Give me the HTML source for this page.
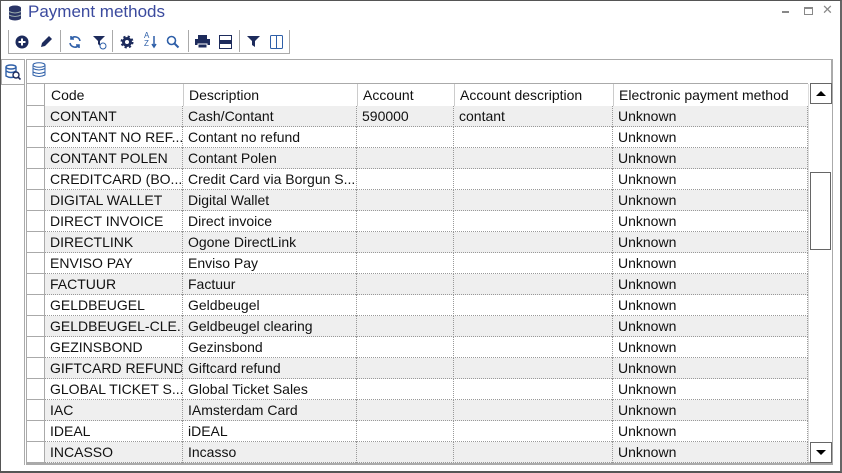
<!DOCTYPE html>
<html><head><style>
*{margin:0;padding:0;box-sizing:border-box}
body{width:842px;height:473px;background:#fff;font-family:"Liberation Sans",sans-serif;position:relative;overflow:hidden}
.win{position:absolute;left:0;top:0;width:842px;height:473px;border:1px solid #555;border-bottom:2px solid #555;border-right:2px solid #666}
.title{position:absolute;left:28px;top:2px;font-size:17px;color:#3b4a9e}
.tb{position:absolute;top:30px;height:24px;left:8px;width:282px;border-right:1px solid #aaa;border-left:1px solid #aaa;border-bottom:1px solid #aaa}
.sep{position:absolute;top:30px;width:1px;height:22px;background:#aaa}
.ic{position:absolute;top:35px}
.grid{position:absolute;left:26px;top:59px;width:807px;height:406px;border:1px solid #aaa;border-right:2px solid #aaa;border-bottom:3px solid #aaa}
.hdr{position:absolute;top:84px;height:22px;font-size:14px;color:#111;line-height:22px}
.row{position:absolute;left:45px;width:763px;height:21px;border-bottom:1px dotted #999}
.row div{position:absolute;top:0;height:21px;line-height:20px;font-size:14px;color:#111;padding-left:5px;border-right:1px dotted #999;white-space:nowrap;overflow:hidden}
.g{background:#efefef}
.ind{position:absolute;left:27px;width:18px;height:21px;border-bottom:1px solid #aaa;border-right:1px solid #aaa}
</style></head><body>
<div class="win"></div>
<svg style="position:absolute;left:8px;top:5px" width="14" height="16"><ellipse cx="7" cy="3" rx="6" ry="2.5" fill="#2a3566"/><rect x="1" y="3" width="12" height="10" fill="#2a3566"/><ellipse cx="7" cy="13" rx="6" ry="2.5" fill="#2a3566"/><path d="M1 6.5q6 3 12 0M1 10q6 3 12 0" stroke="#9aa" fill="none"/></svg>
<div class="title">Payment methods</div>
<div style="position:absolute;left:782px;top:11px;width:7px;height:2px;background:#888"></div>
<div style="position:absolute;left:804px;top:7px;width:9px;height:8px;border:1px solid #888;border-top-width:2px"></div>
<div style="position:absolute;left:822px;top:2px;font-size:13px;color:#888">✕</div>
<div class="tb"></div>
<div class="sep" style="left:60px"></div><div class="sep" style="left:112px"></div><div class="sep" style="left:188px"></div><div class="sep" style="left:239px"></div>
<svg class="ic" style="left:15px" width="14" height="14"><circle cx="7" cy="7" r="6.5" fill="#1d2b5c"/><path d="M7 3.5v7M3.5 7h7" stroke="#fff" stroke-width="2"/></svg>
<svg class="ic" style="left:39px" width="14" height="14"><path d="M2 12l1-4 7-7 3 3-7 7z" fill="#1d2b5c"/></svg>
<svg class="ic" style="left:68px" width="14" height="14"><path d="M12 6a5 5 0 0 0-9-2M2 8a5 5 0 0 0 9 2" stroke="#2e5fa8" stroke-width="1.6" fill="none"/><path d="M3 1v3h3M11 13v-3H8" stroke="#2e5fa8" stroke-width="1.6" fill="none"/></svg>
<svg class="ic" style="left:92px" width="15" height="15"><path d="M1 1h12l-5 5v5l-2-2V6z" fill="#1d2b5c"/><circle cx="11" cy="11" r="3" stroke="#2e5fa8" fill="none"/></svg>
<svg class="ic" style="left:120px" width="14" height="14"><circle cx="7" cy="7" r="5" fill="#1d2b5c" stroke="#1d2b5c" stroke-width="3" stroke-dasharray="2 2"/><circle cx="7" cy="7" r="2" fill="#fff"/></svg>
<div class="ic" style="left:144px;top:32px;font-size:8px;line-height:8px;color:#2e5fa8">A<br>Z</div>
<svg class="ic" style="left:151px" width="6" height="14"><path d="M3 1v11M1 9l2 3 2-3" stroke="#2e5fa8" stroke-width="1.5" fill="none"/></svg>
<svg class="ic" style="left:166px" width="14" height="14"><circle cx="5.5" cy="5.5" r="4" stroke="#2e5fa8" stroke-width="1.6" fill="none"/><path d="M8.5 8.5l4 4" stroke="#2e5fa8" stroke-width="2"/></svg>
<svg class="ic" style="left:195px" width="15" height="14"><rect x="3" y="0" width="9" height="4" fill="#1d2b5c"/><rect x="0" y="4" width="15" height="6" fill="#1d2b5c"/><rect x="3" y="9" width="9" height="4" fill="#1d2b5c" stroke="#fff"/></svg>
<svg class="ic" style="left:219px" width="13" height="14"><rect x="0.5" y="0.5" width="12" height="13" fill="none" stroke="#1d2b5c"/><rect x="1" y="5" width="11" height="4" fill="#1d2b5c"/></svg>
<svg class="ic" style="left:247px" width="13" height="13"><path d="M0 1h13L8 6v6L5 10V6z" fill="#1d2b5c"/></svg>
<svg class="ic" style="left:270px" width="13" height="14"><rect x="0.5" y="0.5" width="12" height="13" rx="1" fill="none" stroke="#2e5fa8"/><path d="M6.5 0v14" stroke="#2e5fa8"/></svg>
<div style="position:absolute;left:0;top:59px;width:25px;height:406px;border-right:1px solid #aaa"></div>
<div style="position:absolute;left:1px;top:59px;width:24px;height:26px;border:1px solid #aaa;background:#fff"></div>
<svg style="position:absolute;left:5px;top:64px" width="16" height="16"><ellipse cx="6" cy="3" rx="5" ry="2" fill="none" stroke="#2e5fa8" stroke-width="1.4"/><path d="M1 3v9q5 3 10 0V3M1 7q5 3 10 0" fill="none" stroke="#2e5fa8" stroke-width="1.4"/><circle cx="11" cy="11" r="3" fill="#fff" stroke="#1d2b5c" stroke-width="1.4"/><path d="M13 13l2.5 2.5" stroke="#1d2b5c" stroke-width="1.6"/></svg>
<div class="grid"></div>
<svg style="position:absolute;left:32px;top:62px" width="14" height="16"><ellipse cx="7" cy="3" rx="6" ry="2.3" fill="none" stroke="#2e5fa8"/><path d="M1 3v10q6 3 12 0V3M1 6.5q6 3 12 0M1 10q6 3 12 0" fill="none" stroke="#2e5fa8"/></svg>
<div style="position:absolute;left:27px;top:83px;width:781px;height:1px;background:#aaa"></div>
<div style="position:absolute;left:27px;top:84px;width:18px;height:22px;border-right:1px solid #aaa;border-bottom:1px solid #aaa"></div>
<div class="hdr" style="left:51px">Code</div>
<div class="hdr" style="left:183px;border-left:1px solid #ccc;padding-left:5px">Description</div>
<div class="hdr" style="left:357px;border-left:1px solid #ccc;padding-left:5px">Account</div>
<div class="hdr" style="left:454px;border-left:1px solid #ccc;padding-left:5px">Account description</div>
<div class="hdr" style="left:613px;border-left:1px solid #ccc;padding-left:5px">Electronic payment method</div>
<div style="position:absolute;left:808px;top:84px;width:24px;height:378px;background:#fff;border-left:1px solid #ddd"></div>
<div style="position:absolute;left:810px;top:83px;width:22px;height:21px;border:1px solid #666;background:#fff"></div>
<svg style="position:absolute;left:815px;top:90px" width="12" height="7"><path d="M1 6l5-5 5 5z" fill="#000"/></svg>
<div style="position:absolute;left:810px;top:172px;width:21px;height:78px;border:1px solid #666;background:#fff"></div>
<div style="position:absolute;left:810px;top:442px;width:22px;height:21px;border:1px solid #666;background:#fff"></div>
<svg style="position:absolute;left:815px;top:449px" width="12" height="7"><path d="M1 1l5 5 5-5z" fill="#000"/></svg>
<div id="rows"></div>
<script>
var d=[["CONTANT","Cash/Contant","590000","contant"],["CONTANT NO REF...","Contant no refund"],["CONTANT POLEN","Contant Polen"],["CREDITCARD (BO...","Credit Card via Borgun S..."],["DIGITAL WALLET","Digital Wallet"],["DIRECT INVOICE","Direct invoice"],["DIRECTLINK","Ogone DirectLink"],["ENVISO PAY","Enviso Pay"],["FACTUUR","Factuur"],["GELDBEUGEL","Geldbeugel"],["GELDBEUGEL-CLE...","Geldbeugel clearing"],["GEZINSBOND","Gezinsbond"],["GIFTCARD REFUND","Giftcard refund"],["GLOBAL TICKET S...","Global Ticket Sales"],["IAC","IAmsterdam Card"],["IDEAL","iDEAL"],["INCASSO","Incasso"]];
var h="";d.forEach(function(r,i){var y=106+i*21;
h+='<div class="ind" style="top:'+y+'px"></div><div class="row'+(i%2==0?' g':'')+'" style="top:'+y+'px">'+
'<div style="left:0;width:138px">'+r[0]+'</div><div style="left:138px;width:174px">'+r[1]+'</div><div style="left:312px;width:97px">'+(r[2]||'')+'</div><div style="left:409px;width:159px">'+(r[3]||'')+'</div><div style="left:568px;width:195px">Unknown</div></div>';});
document.getElementById('rows').innerHTML=h;
</script>
</body></html>
